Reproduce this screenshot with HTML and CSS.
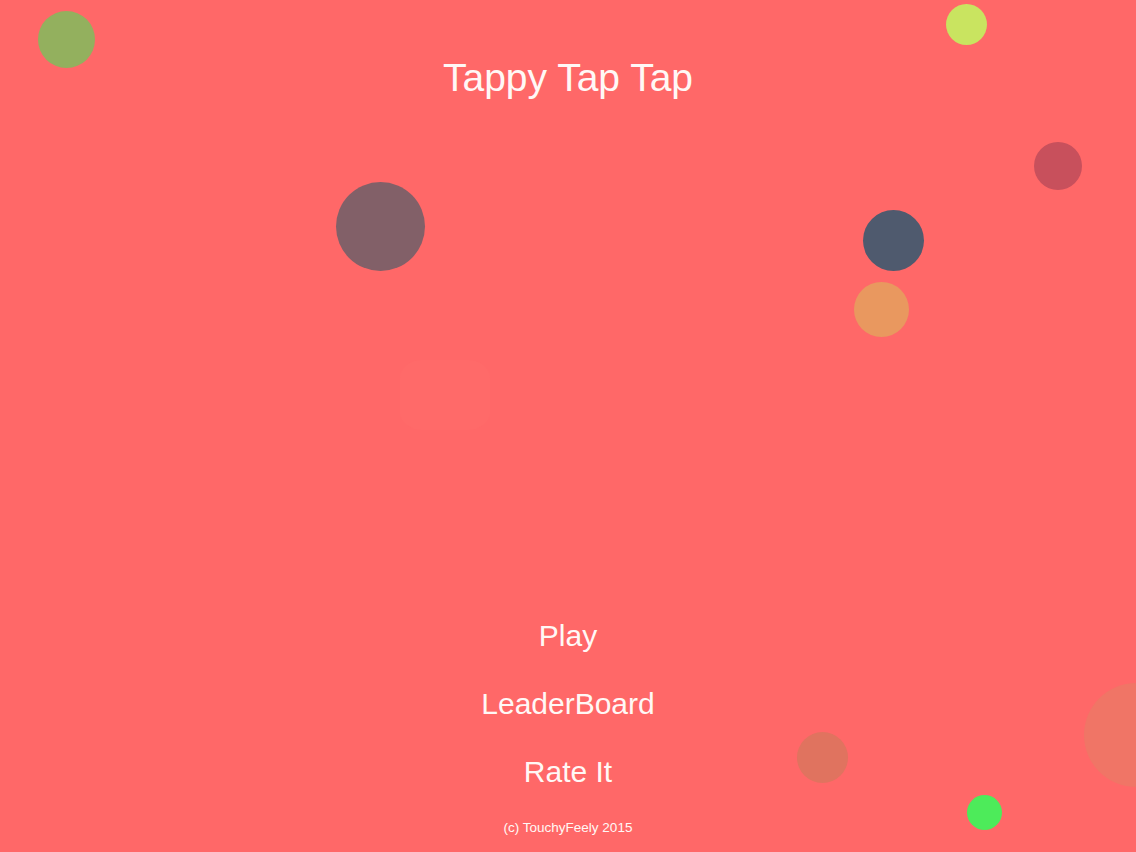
FILE: index.html
```html
<!DOCTYPE html>
<html>
<head>
<meta charset="utf-8">
<title>Tappy Tap Tap</title>
<link rel="stylesheet" href="styles.css">
</head>
<body>
<div class="screen">
  <div class="bubbles">
    <span class="bubble b-green"></span>
    <span class="bubble b-yellow"></span>
    <span class="bubble b-wine"></span>
    <span class="bubble b-mauve"></span>
    <span class="bubble b-navy"></span>
    <span class="bubble b-orange"></span>
    <span class="bubble b-ghost"></span>
    <span class="bubble b-edge"></span>
    <span class="bubble b-coral"></span>
    <span class="bubble b-lime"></span>
  </div>
  <h1 class="title">Tappy Tap Tap</h1>
  <div class="spacer"></div>
  <nav class="menu">
    <a class="menu-item">Play</a>
    <a class="menu-item">LeaderBoard</a>
    <a class="menu-item">Rate It</a>
  </nav>
  <footer class="footer">(c) TouchyFeely 2015</footer>
</div>
</body>
</html>
```
FILE: styles.css
```css
html, body {
  margin: 0;
  padding: 0;
}
body {
  background: #ff6868;
  font-family: "Liberation Sans", Arial, sans-serif;
  color: #fff8f6;
  overflow: hidden;
}
.screen {
  position: relative;
  height: 852px;
  display: flex;
  flex-direction: column;
  align-items: center;
}
.bubbles {
  position: absolute;
  inset: 0;
  pointer-events: none;
}
.bubble {
  position: absolute;
  border-radius: 50%;
}
.b-green  { left: 38px;  top: 11px;  width: 57px; height: 57px; background: #93b05e; }
.b-yellow { left: 946px; top: 4px;   width: 41px; height: 41px; background: #c9e460; }
.b-wine   { left: 1034px; top: 142px; width: 48px; height: 48px; background: #c8505c; }
.b-mauve  { left: 336px; top: 182px; width: 89px; height: 89px; background: #826068; }
.b-navy   { left: 863px; top: 210px; width: 61px; height: 61px; background: #4f5a6e; }
.b-orange { left: 854px; top: 282px; width: 55px; height: 55px; background: #e9985f; }
.b-ghost  { left: 400px; top: 360px; width: 90px; height: 70px; background: #ff6a69; border-radius: 25%; }
.b-edge   { left: 1084px; top: 683px; width: 104px; height: 104px; background: #f07566; }
.b-coral  { left: 797px; top: 732px; width: 51px; height: 51px; background: #e0735f; }
.b-lime   { left: 967px; top: 795px; width: 35px; height: 35px; background: #4deb5a; }

.title {
  position: relative;
  margin: 56px 0 0;
  font-size: 39px;
  font-weight: normal;
  line-height: 44px;
}
.spacer {
  flex: 1;
}
.menu {
  position: relative;
  display: flex;
  flex-direction: column;
  align-items: center;
}
.menu-item {
  display: block;
  height: 68px;
  line-height: 68px;
  font-size: 30px;
  cursor: pointer;
}
.footer {
  position: relative;
  margin-top: 14px;
  margin-bottom: 16px;
  font-size: 13.5px;
  line-height: 16px;
}
```
